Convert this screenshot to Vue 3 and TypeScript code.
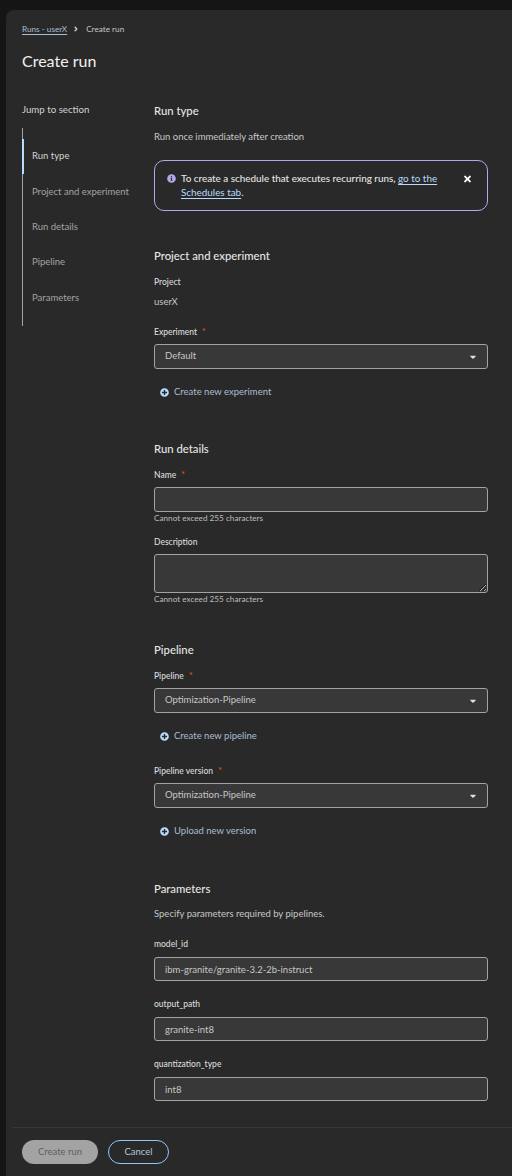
<script setup lang="ts">
const navItems: string[] = ['Run type', 'Project and experiment', 'Run details', 'Pipeline', 'Parameters']
const params: { label: string; value: string }[] = [
  { label: 'model_id', value: 'ibm-granite/granite-3.2-2b-instruct' },
  { label: 'output_path', value: 'granite-int8' },
  { label: 'quantization_type', value: 'int8' },
]
const plusPath = 'M256 8C119 8 8 119 8 256s111 248 248 248 248-111 248-248S393 8 256 8zm144 276c0 6.6-5.4 12-12 12h-92v92c0 6.6-5.4 12-12 12h-56c-6.6 0-12-5.4-12-12v-92h-92c-6.6 0-12-5.4-12-12v-56c0-6.6 5.4-12 12-12h92v-92c0-6.6 5.4-12 12-12h56c6.6 0 12 5.4 12 12v92h92c6.6 0 12 5.4 12 12v56z'
const caretPath = 'M31.3 192h257.3c17.8 0 26.7 21.5 14.1 34.1L174.1 354.8c-7.8 7.8-20.5 7.8-28.3 0L17.2 226.1C4.6 213.5 13.5 192 31.3 192z'
</script>

<template>
  <div class="page">
    <div class="panel">
      <header class="head">
        <nav class="crumbs">
          <a class="crumb-link">Runs - userX</a>
          <svg class="crumb-sep" viewBox="0 0 256 512"><path fill="currentColor" d="M224.3 273l-136 136c-9.4 9.4-24.6 9.4-33.9 0l-22.6-22.6c-9.4-9.4-9.4-24.6 0-33.9l96.4-96.4-96.4-96.4c-9.4-9.4-9.4-24.6 0-33.9L54.3 103c9.4-9.4 24.6-9.4 33.9 0l136 136c9.5 9.4 9.5 24.6.1 34z" /></svg>
          <span>Create run</span>
        </nav>
        <h1 class="title">Create run</h1>
      </header>

      <div class="body">
        <aside class="side">
          <div class="jump">Jump to section</div>
          <ul class="jump-list">
            <li v-for="(item, i) in navItems" :key="item" class="jump-item" :class="{ active: i === 0 }">{{ item }}</li>
          </ul>
        </aside>

        <main class="form">
          <section class="sec">
            <h2 class="sec-title">Run type</h2>
            <p class="plain">Run once immediately after creation</p>
            <div class="alert">
              <svg class="alert-icon" viewBox="0 0 512 512"><path fill="currentColor" d="M256 8C119.043 8 8 119.083 8 256c0 136.997 111.043 248 248 248s248-111.003 248-248C504 119.083 392.957 8 256 8zm0 110c23.196 0 42 18.804 42 42s-18.804 42-42 42-42-18.804-42-42 18.804-42 42-42zm56 254c0 6.627-5.373 12-12 12h-88c-6.627 0-12-5.373-12-12v-24c0-6.627 5.373-12 12-12h12v-64h-12c-6.627 0-12-5.373-12-12v-24c0-6.627 5.373-12 12-12h64c6.627 0 12 5.373 12 12v100h12c6.627 0 12 5.373 12 12v24z" /></svg>
              <div class="alert-text">To create a schedule that executes recurring runs, <a class="alert-link">go to the Schedules tab</a>.</div>
              <svg class="alert-close" viewBox="0 0 352 512"><path fill="currentColor" d="M242.72 256l100.07-100.07c12.28-12.28 12.28-32.19 0-44.48l-22.24-22.24c-12.28-12.28-32.19-12.28-44.48 0L176 189.28 75.93 89.21c-12.28-12.28-32.19-12.28-44.48 0L9.21 111.45c-12.28 12.28-12.28 32.19 0 44.48L109.28 256 9.21 356.07c-12.28 12.28-12.28 32.19 0 44.48l22.24 22.24c12.28 12.28 32.2 12.28 44.48 0L176 322.72l100.07 100.07c12.28 12.28 32.2 12.28 44.48 0l22.24-22.24c12.28-12.28 12.28-32.19 0-44.48L242.72 256z" /></svg>
            </div>
          </section>

          <section class="sec sec-exp">
            <h2 class="sec-title">Project and experiment</h2>
            <div class="label first">Project</div>
            <div class="static">userX</div>
            <div class="label gap-exp">Experiment <span class="req">*</span></div>
            <div class="select">
              <span>Default</span>
              <svg class="caret" viewBox="0 0 320 512"><path fill="currentColor" :d="caretPath" /></svg>
            </div>
            <a class="add"><svg class="plus" viewBox="0 0 512 512"><path fill="currentColor" :d="plusPath" /></svg>Create new experiment</a>
          </section>

          <section class="sec">
            <h2 class="sec-title">Run details</h2>
            <div class="label first">Name <span class="req">*</span></div>
            <input class="input" type="text" aria-label="Name" />
            <div class="help">Cannot exceed 255 characters</div>
            <div class="label gap-desc">Description</div>
            <textarea class="area" aria-label="Description"></textarea>
            <div class="help">Cannot exceed 255 characters</div>
          </section>

          <section class="sec sec-pipe">
            <h2 class="sec-title">Pipeline</h2>
            <div class="label first">Pipeline <span class="req">*</span></div>
            <div class="select">
              <span>Optimization-Pipeline</span>
              <svg class="caret" viewBox="0 0 320 512"><path fill="currentColor" :d="caretPath" /></svg>
            </div>
            <a class="add"><svg class="plus" viewBox="0 0 512 512"><path fill="currentColor" :d="plusPath" /></svg>Create new pipeline</a>
            <div class="label gap-ver">Pipeline version <span class="req">*</span></div>
            <div class="select">
              <span>Optimization-Pipeline</span>
              <svg class="caret" viewBox="0 0 320 512"><path fill="currentColor" :d="caretPath" /></svg>
            </div>
            <a class="add"><svg class="plus" viewBox="0 0 512 512"><path fill="currentColor" :d="plusPath" /></svg>Upload new version</a>
          </section>

          <section class="sec">
            <h2 class="sec-title">Parameters</h2>
            <p class="plain params-note">Specify parameters required by pipelines.</p>
            <div v-for="p in params" :key="p.label" class="param">
              <div class="label">{{ p.label }}</div>
              <input class="input param-input" type="text" :value="p.value" :aria-label="p.label" />
            </div>
          </section>
        </main>
      </div>

      <footer class="foot">
        <button class="btn btn-primary" type="button">Create run</button>
        <button class="btn btn-link" type="button">Cancel</button>
      </footer>
    </div>
  </div>
</template>

<style>
html, body { margin: 0; background: #151515; }
</style>

<style scoped>
* { box-sizing: border-box; }
.page {
  width: 512px;
  height: 1176px;
  padding: 10px 0 0 6px;
  background: #151515;
  overflow: hidden;
  font-family: Lato, "Noto Sans", sans-serif;
  font-size: 9.5px;
  color: #e0e0e0;
}
.panel {
  height: 100%;
  display: flex;
  flex-direction: column;
  background: #292929;
  border-radius: 8px 0 0 0;
}
.head { padding: 13px 16px 0; }
.crumbs {
  display: flex;
  align-items: center;
  height: 12px;
  font-size: 8.2px;
  line-height: 12px;
  color: #c7c7c7;
}
.crumb-link {
  color: #a9bdd2;
  text-decoration: underline;
  text-underline-offset: 1.5px;
}
.crumb-sep { width: 4px; height: 8px; margin: 0 8px 0 7px; color: #d0d0d0; }
.title {
  margin: 16px 0 0;
  font-size: 16px;
  line-height: 20px;
  font-weight: 400;
  color: #f2f2f2;
}
.body {
  flex: 1;
  min-height: 0;
  display: flex;
  padding: 32px 24px 0 16px;
  overflow: hidden;
}
.side { width: 132px; flex: none; }
.jump { font-size: 9.7px; line-height: 13px; color: #d2d2d2; }
.jump-list {
  list-style: none;
  margin: 12px 0 0;
  padding: 11px 0 10px;
  width: 116px;
  border-left: 1px solid #a3a3a3;
}
.jump-item {
  height: 35.4px;
  padding: 0 0 2px 9px;
  display: flex;
  align-items: center;
  white-space: nowrap;
  color: #a3a3a3;
  position: relative;
}
.jump-item.active { color: #d2d2d2; }
.jump-item.active::before {
  content: "";
  position: absolute;
  left: -1px;
  top: 0;
  bottom: 0;
  width: 2px;
  background: #b9dafc;
}
.form { flex: 1; min-width: 0; }
.sec { margin-bottom: 37px; }
.sec-exp { margin-bottom: 42px; }
.sec-pipe { margin-bottom: 43px; }
.sec-title {
  margin: 0;
  font-size: 11.3px;
  line-height: 16px;
  font-weight: 500;
  color: #e6e6e6;
}
.plain { margin: 11px 0 0; line-height: 14px; color: #c7c7c7; }
.alert {
  display: flex;
  align-items: flex-start;
  margin-top: 16px;
  height: 51px;
  padding: 10px 16px 0 12px;
  border: 1px solid #b6a6e9;
  border-radius: 10px;
}
.alert-icon { width: 9px; height: 9px; margin: 3px 5px 0 0; flex: none; color: #b6a6e9; }
.alert-text { flex: 1; font-size: 9.9px; line-height: 14px; font-weight: 500; color: #e6e6e6; padding-right: 16px; }
.alert-link {
  color: #b9dafc;
  font-weight: 400;
  text-decoration: underline;
  text-underline-offset: 2px;
}
.alert-close { width: 7px; height: 10px; margin-top: 3px; flex: none; color: #fff; }
.label {
  font-size: 8.5px;
  line-height: 12px;
  font-weight: 500;
  color: #dcdcdc;
}
.first { margin-top: 12px; }
.req { color: #f0561d; margin-left: 3px; }
.static { margin-top: 7px; line-height: 14px; color: #c7c7c7; }
.gap-exp { margin-top: 17px; }
.gap-desc { margin-top: 12px; }
.gap-ver { margin-top: 22px; }
.select, .input, .area {
  display: block;
  width: 100%;
  background: #383838;
  border: 1px solid #a3a3a3;
  border-radius: 3px;
  color: #c7c7c7;
  font: inherit;
}
.select {
  margin-top: 6px;
  height: 25px;
  padding: 0 10px 2px;
  display: flex;
  align-items: center;
  justify-content: space-between;
  line-height: 14px;
}
.caret { width: 6px; height: 10px; margin-right: 1px; margin-top: 2px; color: #e0e0e0; }
.input {
  margin-top: 6px;
  height: 25px;
  padding: 0 10px;
  outline: none;
}
.area {
  margin-top: 6px;
  height: 39px;
  padding: 4px 10px;
  outline: none;
  resize: vertical;
}
.help { margin-top: 1px; font-size: 8.2px; line-height: 11px; color: #bdbdbd; }
.add {
  display: flex;
  align-items: center;
  margin-top: 16px;
  margin-left: 6px;
  height: 14px;
  line-height: 14px;
  color: #a9bdd2;
}
.plus { width: 9px; height: 9px; margin-right: 5px; color: #b9dafc; }
.params-note { margin-top: 10px; }
.param { margin-top: 17px; }
.param-input { margin-top: 7px; height: 24px; }
.foot {
  height: 49px;
  flex: none;
  margin-left: 6px;
  padding: 12px 0 0 10px;
  border-top: 1px solid #383838;
  display: flex;
  align-items: flex-start;
  gap: 10px;
}
.btn {
  height: 24px;
  border-radius: 12px;
  font: inherit;
  line-height: 14px;
  padding: 0;
}
.btn-primary {
  width: 76px;
  border: 0;
  background: #a3a3a3;
  color: #5f5f5f;
}
.btn-link {
  width: 61px;
  background: transparent;
  border: 1px solid #92c5f9;
  color: #b0c6dc;
}
</style>
